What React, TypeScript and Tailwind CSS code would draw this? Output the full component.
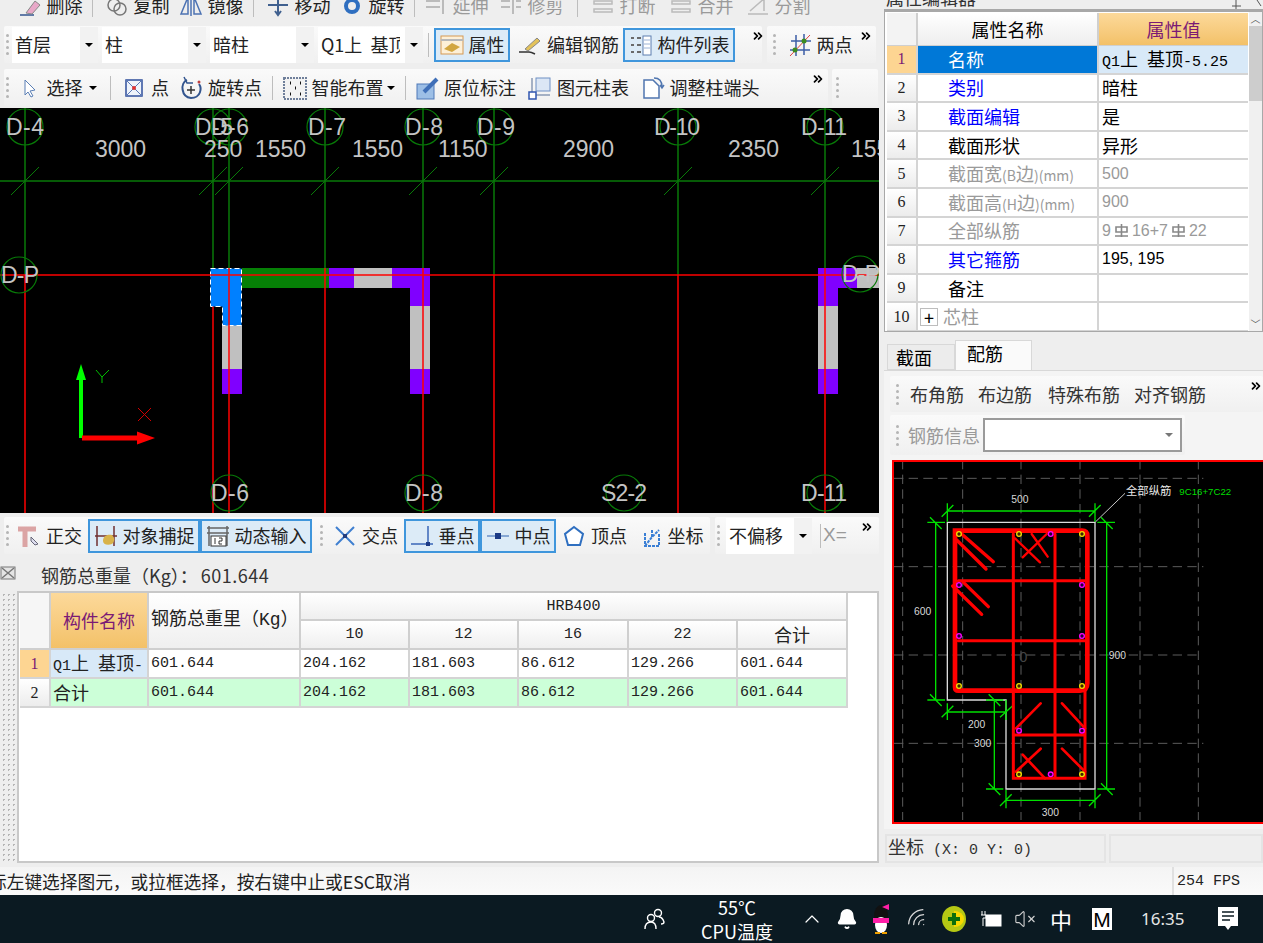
import React from 'react';
import { Bell, ChevronUp, ChevronsRight, Wifi, VolumeX } from 'lucide-react';

const cjk = "font-['Noto_Sans_CJK_SC','Noto_Sans',sans-serif]";
const mono = "font-['Liberation_Mono','Noto_Sans_CJK_SC',monospace]";

function Grip({ className = '' }: { className?: string }) {
  return (
    <div className={`flex w-[6px] shrink-0 flex-col gap-[3px] ${className}`}>
      {[0, 1, 2, 3].map((i) => (
        <span key={i} className="h-[3px] w-[3px] rounded-full bg-[#b5b5b5]" />
      ))}
    </div>
  );
}

function Sep({ className = 'mx-[6px]' }: { className?: string }) {
  return <div className={`h-[24px] w-px shrink-0 bg-[#bdbdbd] ${className}`} />;
}

function More({ className = '' }: { className?: string }) {
  return <ChevronsRight size={14} strokeWidth={3} className={`mt-[3px] shrink-0 self-start text-black ${className}`} />;
}

function Caret({ className = 'border-t-black' }: { className?: string }) {
  return <span className={`h-0 w-0 shrink-0 border-x-[4px] border-t-[4px] border-x-transparent ${className}`} />;
}

function Tool({
  icon,
  label,
  className,
  active,
  grey,
}: {
  icon?: React.ReactNode;
  label: string;
  className: string;
  active?: boolean;
  grey?: boolean;
}) {
  return (
    <div
      className={`flex h-[34px] shrink-0 items-center justify-center gap-[5px] text-[18px] whitespace-nowrap ${
        active ? 'border-2 border-[#3f96dc] bg-[#dcebf7]' : ''
      } ${grey ? 'text-[#9a9a9a]' : 'text-[#222]'} ${className}`}
    >
      {icon}
      <span>{label}</span>
    </div>
  );
}

function Combo({ label, className, labelClass = 'flex-1' }: { label: string; className: string; labelClass?: string }) {
  return (
    <div className={`flex h-[36px] shrink-0 items-center justify-between overflow-hidden bg-white pl-[3px] text-[18px] text-[#222] ${className}`}>
      <span className={`overflow-hidden whitespace-pre ${labelClass}`}>{label}</span>
      <span className="flex h-full w-[18px] shrink-0 items-center justify-center bg-[#f2f2f2]">
        <Caret />
      </span>
    </div>
  );
}

const Ic = ({ children }: { children: React.ReactNode }) => (
  <svg width="24" height="24" viewBox="0 0 24 24" fill="none" className="shrink-0">
    {children}
  </svg>
);

const ic = {
  erase: <Ic><path d="M2 22h14" stroke="#33558f" strokeWidth="1.5" /><path d="M8 20l9-12 5 4-8 9z" fill="#e8a8c8" stroke="#888" /></Ic>,
  copy: <Ic><circle cx="9" cy="12" r="6" stroke="#777" strokeWidth="1.5" /><circle cx="15" cy="16" r="6" stroke="#777" strokeWidth="1.5" /></Ic>,
  mirror: <Ic><path d="M2 21L9 4v17zM22 21L15 4v17zM12 2v21" stroke="#4d73b3" strokeWidth="1.5" /></Ic>,
  move: <Ic><path d="M12 3v18M2 12h20M9 6l3-4 3 4M9 18l3 4 3-4" stroke="#40608f" strokeWidth="2" /></Ic>,
  rotate: <Ic><circle cx="12" cy="13" r="6" stroke="#2f6fc0" strokeWidth="4" /></Ic>,
  extend: <Ic><path d="M2 8h14M2 14h14M19 3v18" stroke="#bbb" strokeWidth="2" /></Ic>,
  trim: <Ic><path d="M2 8h9M2 14h9M14 3v18M17 8h5M17 14h5" stroke="#bbb" strokeWidth="2" /></Ic>,
  broken: <Ic><path d="M3 8h18v3H3zM3 16h18v3H3z" stroke="#bbb" strokeWidth="1.5" /></Ic>,
  split: <Ic><path d="M2 21h20M4 18L20 4M8 6h10v12" stroke="#bbb" strokeWidth="1.5" /></Ic>,
  prop: <Ic><rect x="1" y="3" width="22" height="18" fill="#fdf0d8" stroke="#d59a55" /><path d="M1 7h22" stroke="#b8b8b8" strokeWidth="2" /><path d="M4 16l8-6 8 4-8 5z" fill="#d2a640" /></Ic>,
  pencil: <Ic><path d="M1 19h10c2 0 4 1 6 2" stroke="#333" strokeWidth="1.5" /><path d="M7 16L19 5l3 3-12 10z" fill="#e3c25a" stroke="#888" /></Ic>,
  list: <Ic><rect x="14" y="3" width="8" height="19" fill="#fff" stroke="#5d7fb0" /><path d="M15 7h6M15 11h6M15 15h6" stroke="#9db4d6" /><path d="M2 5h3M8 5h4M2 12h3M8 12h4M2 19h3M8 19h4" stroke="#6a6a6a" strokeWidth="2" /></Ic>,
  twoPt: <Ic><path d="M3 8h20M2 17h20M8 2v21M16 1v21" stroke="#3d5ea6" strokeWidth="1.5" /><path d="M2 23L22 2" stroke="#e04040" /><circle cx="16" cy="8" r="2.5" fill="#3d8a20" /><circle cx="7" cy="17" r="2.5" fill="#3d8a20" /></Ic>,
  select: <Ic><path d="M7 4l10 10-5 1 3 5-2 1-3-5-3 3z" fill="#fff" stroke="#5a7fb5" /></Ic>,
  point: <Ic><rect x="4" y="4" width="16" height="16" fill="#eef3fb" stroke="#2f4f9c" strokeWidth="1.5" /><path d="M4 4l16 16M20 4L4 20" stroke="#5a78b5" /><circle cx="12" cy="12" r="2" fill="#e03030" /></Ic>,
  rotPt: <Ic><path d="M8 4c-7 3-6 17 4 18 10 0 11-10 8-14" stroke="#33558f" strokeWidth="2" /><path d="M12 10v8M8 14h8" stroke="#333" strokeWidth="1.5" /><path d="M5 1l3 6h6" stroke="#33558f" strokeWidth="1.5" /><circle cx="20" cy="6" r="1.500" fill="#c04040" /></Ic>,
  smart: <Ic><rect x="1" y="2" width="22" height="21" fill="#f2f2f2" stroke="#6f7f9a" strokeWidth="2" strokeDasharray="2 1" /><path d="M7 7h1M17 7h1M12 12h1M7 18h1M17 18h1" stroke="#111" strokeWidth="3" /></Ic>,
  origin: <Ic><rect x="2" y="8" width="17" height="15" fill="#9dbfe6" stroke="#4e79b8" /><path d="M9 16L22 3" stroke="#3f6fb8" strokeWidth="4" /></Ic>,
  table: <Ic><rect x="8" y="2" width="14" height="13" fill="#dbe6f5" stroke="#6f90c4" /><path d="M4 2v17h18" stroke="#8a9bb5" strokeWidth="1.5" /><rect x="1" y="16" width="7" height="7" fill="#fff" stroke="#2f55b0" strokeWidth="1.5" /></Ic>,
  adjust: <Ic><path d="M3 4h9l6 6v12H3z" fill="#fff" stroke="#5076b0" strokeWidth="1.5" /><path d="M13 2c5 0 8 3 8 9M19 9l2 3 2-3" stroke="#5076b0" strokeWidth="1.5" /></Ic>,
  ortho: <Ic><path d="M1 5h18M8 5v18" stroke="#dba4a4" strokeWidth="5" /><path d="M14 13l7 7-3 1-4-4z" fill="#dde" stroke="#667" /></Ic>,
  snap: <Ic><path d="M3 2v20M20 2v20M1 12h22" stroke="#703030" strokeWidth="1.5" /><path d="M9 17c0-5 4-7 9-6 3 3 3 6 0 9-5 2-9 0-9-3z" fill="#d8b34a" /></Ic>,
  dyn: <Ic><path d="M1 4h22M1 9h22M3 2v20M21 2v20" stroke="#666" strokeWidth="1.5" /><rect x="5" y="12" width="15" height="10" fill="#fff" stroke="#333" /><path d="M9 14v6M13 14h3v3h-3v3h3" stroke="#333" /></Ic>,
  cross: <Ic><path d="M3 3l18 18M21 3L3 21" stroke="#3f7fd0" strokeWidth="2" /><rect x="10" y="10" width="4" height="4" fill="#223e80" /></Ic>,
  perp: <Ic><path d="M18 2v18M1 20h22" stroke="#3a67b8" strokeWidth="1.5" /><rect x="16" y="18" width="4" height="4" fill="#1c3a85" /></Ic>,
  mid: <Ic><path d="M1 12h22" stroke="#6a90c8" strokeWidth="1.5" /><rect x="9" y="9" width="6" height="6" fill="#1c3a85" /></Ic>,
  vertex: <Ic><path d="M12 3l9 7-3 11H6L3 10z" fill="#fff" stroke="#2f6fc0" strokeWidth="2" /></Ic>,
  coord: <Ic><path d="M6 9v13h14V9M6 22L13 13L20 6M13 13v-8" stroke="#3a7fd5" strokeWidth="2" strokeDasharray="3 1" /></Ic>,
};

function PlanView() {
  const top = [25, 213, 229, 325, 423, 494, 678, 825];
  const gridRed = '#ff0000';
  const gridGreen = '#087a08';
  const bubbles: [number, number, string, number][] = [
    [25, 127, 'D-4', 6],
    [213, 127, 'D-5', 195],
    [229, 127, 'D-6', 211],
    [325, 127, 'D-7', 308],
    [423, 127, 'D-8', 405],
    [495, 127, 'D-9', 477],
    [678, 127, 'D-10', 654],
    [825, 127, 'D-11', 801],
    [19, 275, 'D-P', 1],
    [860, 274, 'D-P', 842],
    [229, 493, 'D-6', 211],
    [423, 493, 'D-8', 405],
    [624, 493, 'S2-2', 601],
    [825, 493, 'D-11', 801],
  ];
  const dims: [string, number][] = [
    ['3000', 95],
    ['250', 204],
    ['1550', 255],
    ['1550', 352],
    ['1150', 438],
    ['2900', 563],
    ['2350', 728],
    ['155', 851],
  ];
  return (
    <svg viewBox="0 108 879 405" className="h-[405px] w-[879px] bg-black">
      {top.map((x) => (
        <g key={x}>
          <path d={`M${x} 108V275`} stroke={gridGreen} strokeWidth="1.5" />
          <path d={`M${x} 275V513`} stroke={gridRed} strokeWidth="1.5" />
          <path d={`M${x - 14} 195L${x + 14} 167`} stroke={gridGreen} strokeWidth="1" />
        </g>
      ))}
      <path d="M0 181H879" stroke={gridGreen} strokeWidth="1.5" />

      <path d="M242 268h87v20h-87z" fill="#068006" />
      <path d="M329 268h25v20h-25zM392 268h38v38h-20v-18h-18zM222 369h20v25h-20zM410 369h20v25h-20zM818 268h39v20h-19v18h-20zM818 369h20v25h-20z" fill="#8000ff" />
      <path d="M354 268h38v20h-38zM410 306h20v63h-20zM222 325h20v44h-20zM818 306h20v63h-20zM857 268h22v20h-22z" fill="#c0c0c0" />
      <path d="M210.500 268.500h31v57h-19v-19h-12z" fill="#0080ff" stroke="#fff" strokeWidth="1" strokeDasharray="5 3" />
      <path d="M0 275H879" stroke={gridRed} strokeWidth="1.5" />
      <path d="M229 268V325M325 268V288M423 268V394M229 325V394M825 268V394" stroke={gridRed} strokeWidth="1.5" />

      {bubbles.map(([cx, cy, t, x], i) => (
        <g key={i}>
          <circle cx={cx} cy={cy} r="18" fill="none" stroke={gridGreen} strokeWidth="1.2" />
          <text x={x} y={cy + 8} fill="#c4c4c4" fontSize="23" fontFamily="Liberation Sans" textLength={t.length === 3 ? 38 : 46}>
            {t}
          </text>
        </g>
      ))}
      {dims.map(([t, x]) => (
        <text key={x} x={x} y={157} fill="#c4c4c4" fontSize="23" fontFamily="Liberation Sans">
          {t}
        </text>
      ))}

      <path d="M79 438V380h-3l5-16 5 16h-3v58z" fill="#00ff00" />
      <path d="M82 435.500h55v-4l18 6.500-18 6.500v-4H82z" fill="#ff0000" />
      <path d="M96 370l6 7 7-7M102 377v6" stroke="#00c000" fill="none" />
      <path d="M138 408l13 13M151 408l-13 13" stroke="#d00000" fill="none" />
    </svg>
  );
}

function RebarDrawing() {
  const yel: [number, number][] = [[207, 222], [387, 222], [576, 222], [207, 678], [387, 678], [576, 678], [387, 943], [576, 943]];
  const mag: [number, number][] = [[482, 222], [207, 375], [576, 375], [207, 528], [576, 528], [387, 812], [576, 812], [482, 943]];
  const green = '#00e000';
  const t = (x: number, y: number, s: string, fill = '#d8d8d8', size = 31) => (
    <text x={x} y={y} fill={fill} fontSize={size} fontFamily="Liberation Sans">
      {s}
    </text>
  );
  return (
    <svg viewBox="12 6 1107 1080" className="h-[364px] w-[371px] border-y-2 border-l-2 border-[#ff0000] bg-black">
      <path d="M12 55H940M12 320H940M12 585H935M12 850H940M38 0V1080M218 0V1080M393 0V1080M570 0V1080M750 0V1080M925 0V1080" stroke="#5c5c5c" strokeWidth="3" strokeDasharray="28 16" />

      <path d="M172 187H615V987H348V720H172Z" fill="none" stroke="#dcdcdc" strokeWidth="4" />
      <path d="M615 187L705 100" stroke="#c8c8c8" strokeWidth="3" />

      <g fill="none" stroke={green} strokeWidth="4">
        <path d="M172 153H615M172 130V185M615 130V185M155 170L190 135M597 170L632 135" />
        <path d="M137 187V720M112 187H165M112 720H165M120 172L155 207M120 703L155 738" />
        <path d="M650 187V987M622 187H675M622 987H675M633 172L668 207M633 970L668 1005" />
        <path d="M172 756H348M172 730V780M348 720V780M155 772L190 737M330 772L368 737" />
        <path d="M313 720V987M288 720H340M288 987H340M296 703L331 738M296 970L331 1005" />
        <path d="M348 1021H615M348 990V1045M615 990V1045M330 1038L365 1003M597 1038L632 1003" />
      </g>

      <g fill="none" stroke="#ff0000" strokeLinecap="round">
        <path d="M205 212H576Q592 212 592 228V670Q592 692 570 692H205Q195 692 195 680V212Z" strokeWidth="14" />
        <path d="M370 222V955H585V680M495 222V955M370 825H585M205 362H585M205 542H585" strokeWidth="9" />
        <path d="M215 222L310 305M200 240L288 327M188 378L275 463M218 365L295 440" strokeWidth="10" />
        <path d="M375 235L450 307M398 292L470 222M425 222L473 290" strokeWidth="7" />
        <path d="M378 805L452 730M516 730L585 805M378 935L452 866M398 884L465 955M516 866L585 935" strokeWidth="8" />
      </g>

      {yel.map(([x, y]) => (
        <circle key={`${x}-${y}`} cx={x} cy={y} r="7" fill="#402000" stroke="#f0e000" strokeWidth="4" />
      ))}
      {mag.map(([x, y]) => (
        <circle key={`${x}-${y}`} cx={x} cy={y} r="7" fill="#200030" stroke="#ff00ff" strokeWidth="4" />
      ))}

      {t(364, 128, '500')}
      {t(72, 466, '600')}
      {t(656, 596, '900')}
      {t(234, 803, '200')}
      {t(252, 861, '300')}
      {t(455, 1069, '300')}
      <text x="708" y="105" fill="#e8e8e8" fontSize="34" fontFamily="Noto Sans CJK SC">全部纵筋</text>
      {t(868, 104, '9C16+7C22', '#00dd00', 29)}
      <text x="388" y="606" fill="#444" fontSize="44" fontFamily="Liberation Sans">0</text>
    </svg>
  );
}

// rebar grade mark used between the bar counts
function Grade() {
  return (
    <svg width="15" height="15" viewBox="0 0 15 15" fill="none" className="mx-[3px] shrink-0">
      <path d="M2 4h11v5H2zM7.500 1v13M1 13h13" stroke="#888" strokeWidth="1.6" />
    </svg>
  );
}

const small = 'text-[14px]';
const latin = "font-['Liberation_Sans',sans-serif] text-[16px]";
const propRows: { n: number; name: React.ReactNode; val: React.ReactNode; tone: string; valTone?: string }[] = [
  {
    n: 1,
    name: '名称',
    val: (
      <span>
        <span className={`${mono} text-[15px]`}>Q1</span>上<span className={`${mono} text-[15px] whitespace-pre`}> </span>基顶<span className={`${mono} text-[15px]`}>-5.25</span>
      </span>
    ),
    tone: 'text-white bg-[#0078d7]',
    valTone: 'bg-[#d8e9f8]',
  },
  { n: 2, name: '类别', val: '暗柱', tone: 'text-[#0000ff]' },
  { n: 3, name: '截面编辑', val: '是', tone: 'text-[#0000ff]' },
  { n: 4, name: '截面形状', val: '异形', tone: 'text-black' },
  {
    n: 5,
    name: <>截面宽<span className={small}>(B</span>边<span className={small}>)(mm)</span></>,
    val: <span className={latin}>500</span>,
    tone: 'text-[#9a9a9a]',
    valTone: 'text-[#9a9a9a]',
  },
  {
    n: 6,
    name: <>截面高<span className={small}>(H</span>边<span className={small}>)(mm)</span></>,
    val: <span className={latin}>900</span>,
    tone: 'text-[#9a9a9a]',
    valTone: 'text-[#9a9a9a]',
  },
  {
    n: 7,
    name: '全部纵筋',
    val: (
      <span className={`flex items-center ${latin}`}>
        9<Grade />16+7<Grade />22
      </span>
    ),
    tone: 'text-[#9a9a9a]',
    valTone: 'text-[#9a9a9a]',
  },
  { n: 8, name: '其它箍筋', val: <span className={latin}>195, 195</span>, tone: 'text-[#0000ff]' },
  { n: 9, name: '备注', val: '', tone: 'text-black' },
  { n: 10, name: '芯柱', val: '', tone: 'text-[#9a9a9a]' },
];

function PropertyTable() {
  return (
    <div className="flex h-[321px] border border-[#a8a8a8] bg-white">
      <div className="grid flex-1 grid-cols-[31px_181px_149px] grid-rows-[33px_repeat(10,28.6px)] content-start overflow-hidden pt-[1px] pl-[2px]">
        <div className="border-r-2 border-b border-[#cfcfcf] bg-[#f3f3f3]" />
        <div className={`flex items-center justify-center border-r-2 border-b border-[#cfcfcf] bg-gradient-to-b from-white to-[#eeeeee] text-[18px] text-black ${cjk}`}>属性名称</div>
        <div className={`flex items-center justify-center border-b border-[#cfcfcf] bg-gradient-to-b from-[#fcd99a] to-[#f3c168] text-[18px] text-[#7b1a75] ${cjk}`}>属性值</div>
        {propRows.map((r) => (
          <React.Fragment key={r.n}>
            <div className={`flex items-center justify-center border-r-2 border-b-2 border-[#d4d4d4] font-['Liberation_Serif',serif] text-[16px] ${r.n === 1 ? 'bg-[#fdd592] text-[#7b1a75]' : 'bg-gradient-to-b from-white to-[#ececec] text-[#222]'}`}>
              {r.n}
            </div>
            <div className={`flex items-center gap-[5px] border-r-2 border-b-2 border-[#d4d4d4] text-[18px] whitespace-nowrap ${r.n === 10 ? 'pl-[2px]' : 'pl-[30px]'} ${r.tone} ${cjk}`}>
              {r.n === 10 && (
                <span className="flex h-[18px] w-[18px] items-center justify-center border border-[#bdbdbd] text-[18px] leading-none text-black">+</span>
              )}
              <span>{r.name}</span>
            </div>
            <div className={`flex items-center border-b-2 border-[#d4d4d4] pl-[3px] text-[18px] whitespace-nowrap ${r.valTone ?? 'text-black'} ${cjk}`}>
              {r.val}
            </div>
          </React.Fragment>
        ))}
      </div>
      <div className="flex w-[13px] flex-col items-center bg-[#f0f0f0]">
        <span className="text-[10px] leading-[14px] text-[#555]">︿</span>
        <div className="h-[75px] w-full bg-[#cdcdcd]" />
        <div className="flex-1" />
        <span className="text-[10px] leading-[14px] text-[#555]">﹀</span>
      </div>
    </div>
  );
}

function WeightTable() {
  const head = 'flex items-center justify-center border-r-2 border-b-2 border-[#cfcfcf] bg-gradient-to-b from-white to-[#efefef]';
  const cell = 'flex items-center border-r-2 border-b-2 border-[#d4d4d4] pt-[2px] pl-[2px] whitespace-nowrap overflow-hidden text-[15px]';
  const nums = ['601.644', '204.162', '181.603', '86.612', '129.266', '601.644'];
  return (
    <div className="h-[272px] border-2 border-[#c8c8c8] bg-white pl-[1px]">
      <div className={`grid w-[829px] grid-cols-[31px_98px_152px_109px_109px_110px_109px_110px] grid-rows-[28px_29px_29px_29px] text-[#222] ${mono}`}>
        <div className="row-span-2 border-r-2 border-b-2 border-[#cfcfcf] bg-[#f6f6f6]" />
        <div className={`row-span-2 flex items-center justify-center border-r-2 border-b-2 border-[#cfcfcf] bg-gradient-to-b from-[#fcd99a] to-[#f3c168] text-[18px] text-[#7b1a75] ${cjk}`}>构件名称</div>
        <div className={`${head} row-span-2 !justify-start pl-[2px] text-[18px] whitespace-nowrap`}>钢筋总重里（Kg）</div>
        <div className={`${head} col-span-5 pt-[2px] text-[15px]`}>HRB400</div>
        {['10', '12', '16', '22'].map((d) => (
          <div key={d} className={`${head} pt-[2px] text-[15px]`}>{d}</div>
        ))}
        <div className={`${head} text-[18px] ${cjk}`}>合计</div>

        <div className="flex items-center justify-center border-r-2 border-b-2 border-[#d4d4d4] bg-[#fdd592] font-['Liberation_Serif',serif] text-[16px] text-[#7b1a75]">1</div>
        <div className={`${cell} bg-[#d8e9f8] !pt-0 text-[15px]`}>
          <span className="whitespace-pre">
            Q1<span className={`text-[18px] ${cjk}`}>上</span> <span className={`text-[18px] ${cjk}`}>基顶</span>-
          </span>
        </div>
        {nums.map((v, i) => (
          <div key={i} className={cell}>{v}</div>
        ))}

        <div className="flex items-center justify-center border-r-2 border-b-2 border-[#d4d4d4] bg-gradient-to-b from-white to-[#ececec] font-['Liberation_Serif',serif] text-[16px]">2</div>
        <div className={`${cell} bg-[#ccffd8] !pt-0 text-[18px] ${cjk}`}>合计</div>
        {nums.map((v, i) => (
          <div key={i} className={`${cell} bg-[#ccffd8]`}>{v}</div>
        ))}
      </div>
    </div>
  );
}

function Taskbar() {
  return (
    <div className={`flex h-[48px] items-center bg-[#0b1a22] text-white ${cjk}`}>
      <svg width="24" height="24" viewBox="0 0 24 24" fill="none" stroke="white" strokeWidth="1.4" className="ml-[643px] shrink-0">
        <circle cx="15" cy="6" r="3.500" />
        <circle cx="8" cy="11" r="3.500" />
        <path d="M18 17c2 0 3-1 3-2-1-3-3-5-5-5M2 22c0-4 2-7 6-7s5 3 5 7" />
      </svg>
      <div className="ml-[22px] flex w-[96px] shrink-0 flex-col items-center text-[18px] leading-[24px]">
        <span>55℃</span>
        <span>CPU温度</span>
      </div>
      <ChevronUp size={24} strokeWidth={1.2} className="ml-[15px] shrink-0" />
      <Bell size={22} fill="white" className="ml-[12px] shrink-0" />
      <svg width="22" height="30" viewBox="0 0 22 30" className="ml-[12px] shrink-0">
        <ellipse cx="11" cy="12" rx="7" ry="11" fill="#111" />
        <ellipse cx="11" cy="21" rx="6" ry="8" fill="#fff" />
        <path d="M3 14h16v5H3z" fill="#ff1fa8" />
        <path d="M12 3l7-3v6z" fill="#ff1fa8" />
        <path d="M5 28h5v2H5zM12 28h5v2h-5z" fill="#f0a000" />
      </svg>
      <Wifi size={24} strokeWidth={1.3} className="ml-[14px] shrink-0 -rotate-45 text-[#d8d8d8]" />
      <svg width="26" height="26" viewBox="0 0 26 26" className="ml-[11px] shrink-0">
        <ellipse cx="13" cy="13" rx="12" ry="13" fill="#b6c814" />
        <path d="M13 5a10 8 0 0 1 0 16z" fill="#f6d800" />
        <path d="M11 7h4v4h4v4h-4v4h-4v-4H7v-4h4z" fill="#0b6e0b" />
      </svg>
      <svg width="22" height="18" viewBox="0 0 22 18" fill="none" stroke="white" className="ml-[13px] shrink-0">
        <rect x="6" y="5" width="15" height="11" fill="white" />
        <path d="M2 1v4M5 1v4M1 5h5v3H3v8" />
      </svg>
      <VolumeX size={22} strokeWidth={1.2} className="ml-[12px] shrink-0 text-[#d0d0d0]" />
      <span className="ml-[14px] shrink-0 text-[22px]">中</span>
      <span className="ml-[20px] flex h-[22px] w-[20px] shrink-0 items-center justify-center border border-white bg-white font-['Liberation_Sans',sans-serif] text-[21px] leading-none text-black">M</span>
      <span className="ml-[29px] shrink-0 font-['Noto_Sans',sans-serif] text-[17px] text-[#e6e6e6]">16:35</span>
      <svg width="22" height="26" viewBox="0 0 22 26" className="ml-[33px] shrink-0">
        <path d="M1 1h20v19h-7l-3 4-3-4H1z" fill="#fff" />
        <path d="M5 6h12M5 10h12M5 14h8" stroke="#0b1a22" strokeWidth="1.5" />
      </svg>
    </div>
  );
}

export default function App() {
  const bar = 'flex items-center rounded-[2px] bg-gradient-to-b from-[#fafafa] to-[#f0f0f0]';
  return (
    <div className={`flex h-[943px] w-[1263px] flex-col overflow-hidden bg-[#eeeeee] ${cjk}`}>
      <div className="flex h-[867px]">
        <div className="flex w-[884px] shrink-0 flex-col">
          {/* clipped top toolbar */}
          <div className="h-[17px] overflow-hidden pl-[14px]">
            <div className="-mt-[12px] flex items-center">
              <Tool icon={ic.erase} label="删除" className="w-[72px]" />
              <Sep />
              <Tool icon={ic.copy} label="复制" className="w-[76px]" />
              <Tool icon={ic.mirror} label="镜像" className="w-[72px]" />
              <Sep />
              <Tool icon={ic.move} label="移动" className="w-[76px]" />
              <Tool icon={ic.rotate} label="旋转" className="w-[72px]" />
              <Sep />
              <Tool icon={ic.extend} label="延伸" className="w-[70px]" grey />
              <Tool icon={ic.trim} label="修剪" className="w-[80px]" grey />
              <Sep />
              <Tool icon={ic.broken} label="打断" className="w-[78px]" grey />
              <Tool icon={ic.broken} label="合并" className="w-[78px]" grey />
              <Tool icon={ic.split} label="分割" className="w-[76px]" grey />
            </div>
          </div>

          <div className="mt-[9px] flex h-[37px] gap-[5px] pl-[4px]">
            <div className={`${bar} w-[758px] pl-[2px]`}>
              <Grip />
              <Combo label="首层" className="w-[86px]" />
              <Combo label="柱" className="ml-[4px] w-[104px]" />
              <Combo label="暗柱" className="ml-[4px] w-[104px]" />
              <Combo label="Q1上  基顶" labelClass="w-[79px]" className="ml-[4px] w-[105px]" />
              <Sep className="mx-[5px]" />
              <Tool icon={ic.prop} label="属性" className="w-[76px]" active />
              <Tool icon={ic.pencil} label="编辑钢筋" className="ml-[5px] w-[107px]" />
              <Tool icon={ic.list} label="构件列表" className="ml-[1px] w-[112px]" active />
              <More className="ml-[16px]" />
            </div>
            <div className={`${bar} w-[109px] pl-[6px]`}>
              <Grip />
              <Tool icon={ic.twoPt} label="两点" className="ml-[8px] w-[66px]" />
              <More className="ml-[6px]" />
            </div>
          </div>

          <div className="mt-[6px] flex h-[37px] gap-[4px] pl-[4px]">
            <div className={`${bar} w-[824px] pl-[2px]`}>
              <Grip />
              <div className="ml-[4px] flex w-[89px] shrink-0 items-center gap-[6px] pl-[1px]">
                <Tool icon={ic.select} label="选择" className="w-[66px]" />
                <Caret />
              </div>
              <Sep className="mx-[5px]" />
              <Tool icon={ic.point} label="点" className="ml-[6px] w-[47px]" />
              <Tool icon={ic.rotPt} label="旋转点" className="ml-[9px] w-[85px]" />
              <Sep className="mx-[9px]" />
              <div className="flex w-[115px] shrink-0 items-center gap-[3px]">
                <Tool icon={ic.smart} label="智能布置" className="w-[102px]" />
                <Caret />
              </div>
              <Sep className="mx-[8px]" />
              <Tool icon={ic.origin} label="原位标注" className="w-[103px]" />
              <Tool icon={ic.table} label="图元柱表" className="ml-[10px] w-[103px]" />
              <Tool icon={ic.adjust} label="调整柱端头" className="ml-[10px] w-[120px]" />
              <More className="ml-[51px]" />
            </div>
            <div className={`${bar} w-[46px] pl-[4px]`}>
              <Grip />
            </div>
          </div>

          <div className="mt-[2px] shrink-0">
            <PlanView />
          </div>

          <div className="mt-[4px] flex h-[37px] gap-[5px] pl-[4px]">
            <div className={`${bar} w-[706px] pl-[2px]`}>
              <Grip />
              <Tool icon={ic.ortho} label="正交" className="ml-[4px] w-[67px]" />
              <Tool icon={ic.snap} label="对象捕捉" className="ml-[5px] w-[112px]" active />
              <Tool icon={ic.dyn} label="动态输入" className="w-[112px]" active />
              <Grip className="ml-[8px]" />
              <Tool icon={ic.cross} label="交点" className="ml-[7px] w-[65px]" />
              <Tool icon={ic.perp} label="垂点" className="ml-[6px] w-[76px]" active />
              <Tool icon={ic.mid} label="中点" className="w-[76px]" active />
              <Tool icon={ic.vertex} label="顶点" className="ml-[6px] w-[65px]" />
              <Tool icon={ic.coord} label="坐标" className="ml-[10px] w-[68px]" />
            </div>
            <div className={`${bar} w-[164px] pl-[2px]`}>
              <Grip />
              <Combo label="不偏移" className="ml-[3px] w-[86px]" />
              <Sep className="ml-[8px] mr-[2px]" />
              <span className="font-['Liberation_Sans',sans-serif] text-[19px] text-[#9a9a9a]">X=</span>
              <More className="ml-[13px]" />
            </div>
          </div>

          <div className="relative flex h-[37px] items-center pt-[5px] pl-[41px] text-[18px] text-[#333]">
            <svg width="16" height="14" viewBox="0 0 16 14" fill="none" className="absolute top-[12px] left-0">
              <rect x="1" y="1" width="14" height="12" fill="#e4e4e4" stroke="#777" />
              <path d="M2 2l12 10M14 2L2 12" stroke="#777" strokeWidth="1.5" />
            </svg>
            <span>
              钢筋总重量（Kg）：<span className="ml-[3px] tracking-[0.5px]">601.644</span>
            </span>
          </div>

          <div className="flex h-[272px]">
            <div className="my-[1px] ml-[1px] w-[15px] bg-[radial-gradient(#b5b5b5_1px,transparent_1px)] bg-[length:5px_5px]" />
            <div className="ml-[1px] w-[862px]">
              <WeightTable />
            </div>
          </div>
        </div>

        <div className="flex w-[379px] shrink-0 flex-col">
          <div className="flex h-[11px] justify-between overflow-hidden border-b-2 border-[#a8a8a8] pl-[2px]">
            <div className="-mt-[13px] text-[18px] leading-[20px] text-[#333]">属性编辑器</div>
            <svg width="30" height="9" viewBox="0 0 30 9" fill="none" stroke="#555" className="mr-[1px] shrink-0">
              <path d="M4 0v9M0 6h9M25 0l4 6" />
            </svg>
          </div>
          <PropertyTable />

          <div className={`mt-[8px] flex h-[30px] items-end pl-[3px] text-[18px] ${cjk}`}>
            <div className="flex h-[26px] w-[68px] items-center border border-[#d8d8d8] bg-[#ececec] pl-[8px]">截面</div>
            <div className="flex h-[30px] w-[77px] items-center border-x border-t border-[#d8d8d8] bg-[#fafafa] pb-[4px] pl-[11px]">配筋</div>
          </div>
          <div className="flex flex-1 flex-col border-t border-[#d8d8d8] bg-[#f4f4f4] pt-[5px] pl-[6px]">
            <div className={`${bar} h-[36px] w-[373px] pl-[6px] text-[18px] text-[#333]`}>
              <Grip />
              <span className="ml-[8px]">布角筋</span>
              <span className="ml-[14px]">布边筋</span>
              <span className="ml-[16px]">特殊布筋</span>
              <span className="ml-[14px]">对齐钢筋</span>
              <More className="ml-auto" />
            </div>
            <div className={`${bar} mt-[3px] h-[40px] w-[295px] pl-[6px] text-[18px] text-[#9a9a9a]`}>
              <Grip />
              <span className="ml-[6px]">钢筋信息</span>
              <div className="ml-[3px] flex h-[34px] w-[199px] items-center justify-end border-2 border-[#9a9a9a] bg-white pr-[7px]">
                <Caret className="border-t-[#777]" />
              </div>
            </div>
            <div className="mt-[5px] ml-[2px] flex-none">
              <RebarDrawing />
            </div>
          </div>
          <div className="flex h-[38px] shrink-0 items-center gap-[3px] pt-[4px] pb-[4px] pl-[1px]">
            <div className={`flex h-[29px] w-[221px] items-center border-2 border-[#e4e4e4] pl-[1px] text-[15px] text-[#333] ${mono}`}>
              <span className="whitespace-pre">
                <span className={`text-[18px] ${cjk}`}>坐标</span> (X: 0 Y: 0)
              </span>
            </div>
            <div className="h-[29px] flex-1 border-2 border-[#e4e4e4]" />
          </div>
        </div>
      </div>

      <div className="flex h-[28px] shrink-0 items-center overflow-hidden bg-gradient-to-b from-[#f4f4f4] to-[#fafafa] text-[#222]">
        <div className="-ml-[11px] w-[1183px] overflow-hidden text-[17.7px] whitespace-nowrap">
          标左键选择图元，或拉框选择，按右键中止或ESC取消
        </div>
        <div className={`flex h-full flex-1 items-center border-l-2 border-[#e0e0e0] pt-[3px] pl-[3px] text-[15px] ${mono}`}>254 FPS</div>
      </div>
      <Taskbar />
    </div>
  );
}
